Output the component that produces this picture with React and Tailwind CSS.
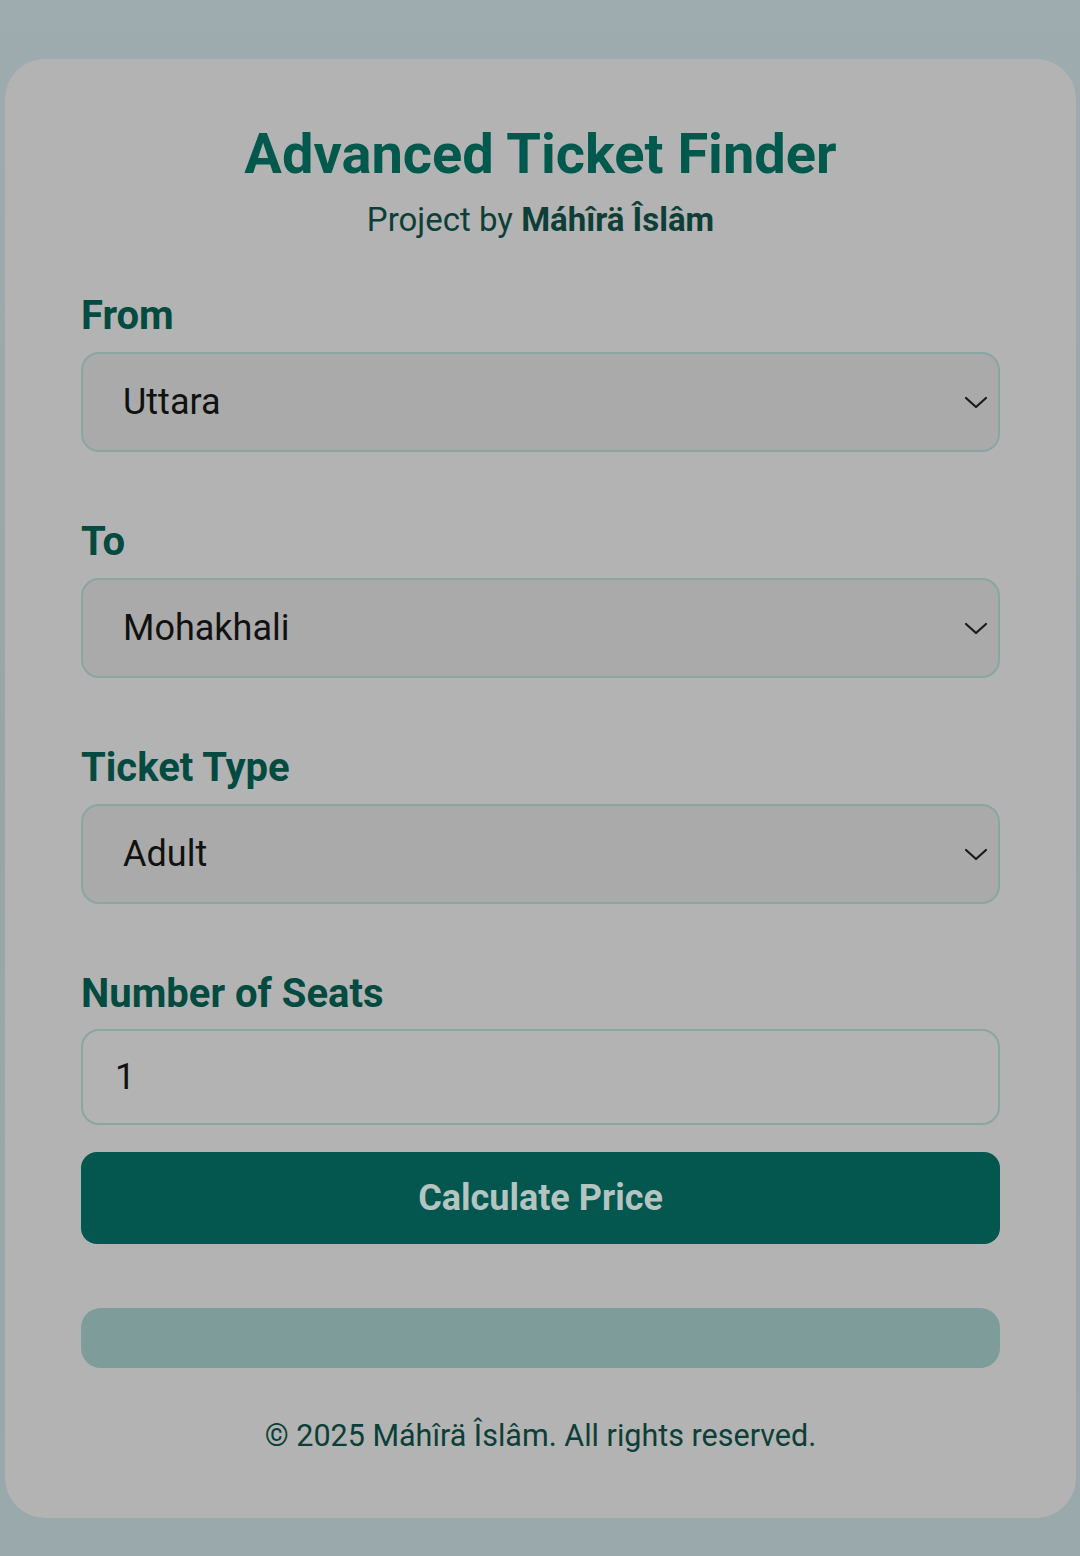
import React from "react";

function Chevron() {
  return (
    <svg width="24" height="14" viewBox="0 0 24 14" fill="none" className="absolute right-[10px] top-1/2 -translate-y-1/2 pointer-events-none">
      <path d="M2 3 L12 12 L22 3" stroke="#1a1a1a" strokeWidth="2.2" strokeLinecap="round" strokeLinejoin="round" />
    </svg>
  );
}

function Field({ label, children }) {
  return (
    <div className="flex flex-col">
      <div className="text-[40px] font-bold text-[#034a40] leading-[46px] mb-[13px]">{label}</div>
      {children}
    </div>
  );
}

function SelectBox({ value }) {
  return (
    <div className="relative h-[100px] rounded-[18px] border-2 border-[#8aa6a3] bg-[#aaaaaa] flex items-center pl-[40px] pr-[40px]">
      <span className="text-[36px] text-[#111] leading-none">{value}</span>
      <Chevron />
    </div>
  );
}

export default function App() {
  return (
    <div
      className="w-[1080px] h-[1556px] pt-[59px] px-[5px] bg-gradient-to-b from-[#9eacb0] via-[#97a6a5] to-[#99a9ac]"
      style={{ fontFamily: "Roboto, 'Noto Sans', sans-serif" }}
    >
      <div className="h-[1459px] w-[1071px] rounded-[40px] bg-[#b3b3b3] px-[76px] pt-[62px] flex flex-col">
        <h1 className="text-center text-[56px] font-bold text-[#00594c] leading-[66px]">Advanced Ticket Finder</h1>
        <p className="text-center text-[33px] text-[#0d3f38] leading-[40px] mt-[13px]">
          Project by <span className="font-bold">Máhîrä Îslâm</span>
        </p>

        <div className="mt-[53px] flex flex-col gap-[67px]">
          <Field label="From"><SelectBox value="Uttara" /></Field>
          <Field label="To"><SelectBox value="Mohakhali" /></Field>
          <Field label="Ticket Type"><SelectBox value="Adult" /></Field>
          <Field label="Number of Seats">
            <div className="h-[96px] rounded-[18px] border-2 border-[#8aa6a3] bg-[#b3b3b3] flex items-center pl-[32px] -mt-[1px]">
              <span className="text-[36px] text-[#111] leading-none">1</span>
            </div>
          </Field>
        </div>

        <button className="mt-[27px] h-[92px] shrink-0 rounded-[16px] bg-[#03574e] text-[36px] font-bold text-[#b4c4c1] flex items-center justify-center">
          Calculate Price
        </button>

        <div className="mt-[64px] h-[60px] shrink-0 rounded-[20px] bg-[#7e9c99]"></div>

        <p className="mt-[50px] text-center text-[30.5px] text-[#0b3f38] leading-[36px]">
          © 2025 Máhîrä Îslâm. All rights reserved.
        </p>
      </div>
    </div>
  );
}
